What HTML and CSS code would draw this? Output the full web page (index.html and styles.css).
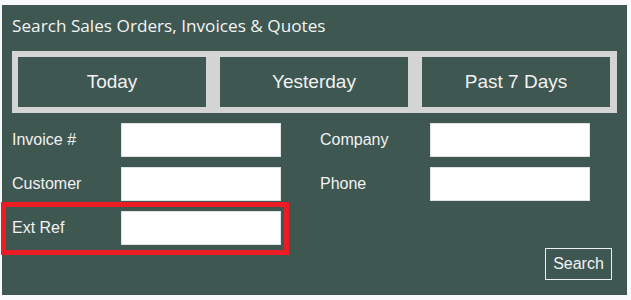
FILE: index.html
```html
<!DOCTYPE html>
<html>
<head>
<meta charset="utf-8">
<link rel="stylesheet" href="styles.css">
</head>
<body>
<div class="panel">
  <div class="title">Search Sales Orders, Invoices &amp; Quotes</div>
  <div class="quick">
    <button class="qbtn">Today</button>
    <button class="qbtn">Yesterday</button>
    <button class="qbtn">Past 7 Days</button>
  </div>
  <div class="form">
    <label class="lbl">Invoice #</label><input class="inp" type="text">
    <label class="lbl lbl2">Company</label><input class="inp" type="text">
    <label class="lbl">Customer</label><input class="inp" type="text">
    <label class="lbl lbl2">Phone</label><input class="inp" type="text">
    <div class="hl-row">
      <label class="lbl">Ext Ref</label><input class="inp" type="text">
      <div class="highlight"></div>
    </div>
  </div>
  <div class="footer">
    <button class="search">Search</button>
  </div>
</div>
</body>
</html>
```

FILE: styles.css
```css
html, body {
  margin: 0;
  padding: 0;
  background: #f8f9fb;
}
body {
  font-family: "Liberation Sans", Arial, sans-serif;
}
.panel {
  box-sizing: border-box;
  margin: 5px 0 0 2px;
  width: 625px;
  height: 290px;
  background: #3e5751;
  padding: 0 10px 0 10px;
  display: flex;
  flex-direction: column;
}
.title {
  font-family: "Open Sans", "Noto Sans", sans-serif;
  font-size: 17.2px;
  color: #f4f4f4;
  height: 46px;
  line-height: 20px;
  padding-top: 11px;
  box-sizing: border-box;
}
.quick {
  display: flex;
  gap: 14px;
  background: #d4d4d4;
  padding: 6px;
  width: 605px;
  box-sizing: border-box;
}
.qbtn {
  width: 188px;
  height: 50px;
  border: 0;
  margin: 0;
  padding: 0;
  background: #3e5751;
  color: #f2f2f2;
  font-family: "Liberation Sans", Arial, sans-serif;
  font-size: 19px;
}
.form {
  display: grid;
  grid-template-columns: 109px 160px 149px 160px;
  row-gap: 10px;
  margin-top: 10px;
}
.lbl {
  color: #f2f2f2;
  font-size: 16px;
  line-height: 34px;
  height: 34px;
}
.lbl2 {
  padding-left: 39px;
}
.inp {
  box-sizing: border-box;
  width: 160px;
  height: 34px;
  margin: 0;
  border: 1px solid #dfe3e6;
  background: #ffffff;
  outline: none;
}
.hl-row {
  grid-column: 1 / span 2;
  display: grid;
  grid-template-columns: 109px 160px;
  position: relative;
}
.highlight {
  position: absolute;
  left: -11px;
  top: -9px;
  width: 288px;
  height: 53px;
  box-sizing: border-box;
  border: 5px solid #ec1c24;
  pointer-events: none;
}
.footer {
  display: flex;
  justify-content: flex-end;
  margin-top: 3px;
  padding-right: 5px;
}
.search {
  box-sizing: border-box;
  width: 67px;
  height: 32px;
  border: 1px solid #f0f0f0;
  background: #3e5751;
  color: #f2f2f2;
  font-family: "Liberation Sans", Arial, sans-serif;
  font-size: 16px;
  padding: 0;
  margin: 0;
}
```
